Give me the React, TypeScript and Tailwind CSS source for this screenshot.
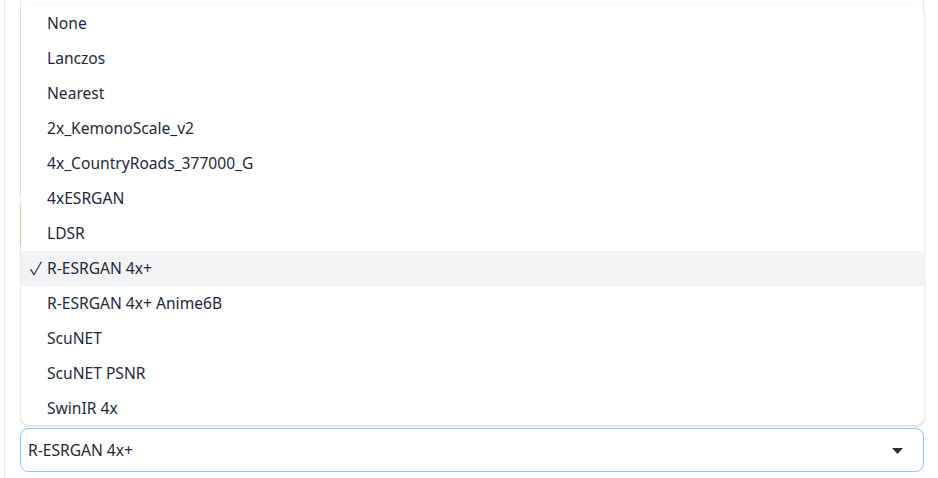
import React from "react";

const items = [
  "None",
  "Lanczos",
  "Nearest",
  "2x_KemonoScale_v2",
  "4x_CountryRoads_377000_G",
  "4xESRGAN",
  "LDSR",
  "R-ESRGAN 4x+",
  "R-ESRGAN 4x+ Anime6B",
  "ScuNET",
  "ScuNET PSNR",
  "SwinIR 4x",
];

export default function App() {
  const selected = "R-ESRGAN 4x+";
  return (
    <div
      className="w-[938px] h-[478px] bg-white overflow-hidden pl-[4px]"
      style={{ fontFamily: '"Noto Sans", "Open Sans", sans-serif' }}
    >
      <div className="relative h-full border-l border-[#e5e7eb] pl-[15px] pr-[14px] flex flex-col">
        {/* background content */}
        <div className="h-[210px] -mt-[10px] border border-[#e5e7eb] rounded-lg" />
        <div className="mt-[0px] h-[52px] border border-[#f8cf9c] rounded-lg" />
        <div className="flex-1" />
        {/* select input */}
        <div className="mb-[6px] h-[44px] rounded-lg border border-[#93c5fd] bg-white flex items-center pl-[7px] pr-[20px] text-[15.6px] text-[#1f2937]">
          <span className="flex-1 pt-[1px]">R-ESRGAN 4x+</span>
          <svg width="11" height="6" viewBox="0 0 11 6" className="mt-[1px]">
            <path d="M0 0 L11 0 L5.5 6 Z" fill="#2b2f36" />
          </svg>
        </div>

        {/* dropdown overlay */}
        <ul className="absolute left-[16px] top-[5px] w-[903px] h-[420px] bg-white rounded-lg shadow-[0_1px_3px_rgba(0,0,0,0.15),0_1px_2px_rgba(0,0,0,0.08)] overflow-hidden pt-[0.5px]">
          {items.map((it) => {
            const sel = it === selected;
            return (
              <li
                key={it}
                className={`h-[35px] flex items-center pl-[9px] pt-[2px] text-[15.6px] text-[#1e293b] ${
                  sel ? "bg-[#f2f3f5]" : ""
                }`}
              >
                <span className="w-[17px] flex items-center">
                  {sel ? (
                    <svg width="12" height="15" viewBox="0 0 12 15" className="-mt-[1px]">
                      <path
                        d="M0.6 8.2 L4 13.8 L11.4 0.8"
                        fill="none"
                        stroke="#334155"
                        strokeWidth="1.3"
                        strokeLinejoin="round"
                      />
                    </svg>
                  ) : null}
                </span>
                <span>{it}</span>
              </li>
            );
          })}
        </ul>
      </div>
    </div>
  );
}
